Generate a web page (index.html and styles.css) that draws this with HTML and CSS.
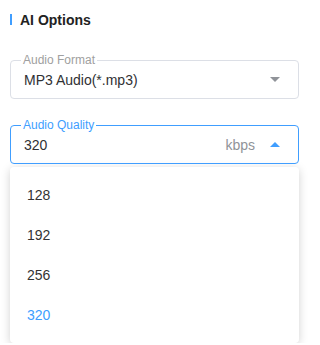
FILE: index.html
```html
<!DOCTYPE html>
<html lang="en">
<head>
<meta charset="utf-8">
<title>AI Options</title>
<link rel="stylesheet" href="styles.css">
</head>
<body>
<div class="panel">
  <div class="title"><span class="bar"></span><span>AI Options</span></div>

  <div class="field">
    <span class="label">Audio Format</span>
    <span class="value">MP3 Audio(*.mp3)</span>
    <span class="caret down"></span>
  </div>

  <div class="field focused">
    <span class="label">Audio Quality</span>
    <span class="value">320</span>
    <span class="unit">kbps</span>
    <span class="caret up"></span>
  </div>

  <ul class="menu">
    <li class="item">128</li>
    <li class="item">192</li>
    <li class="item">256</li>
    <li class="item selected">320</li>
  </ul>
</div>
</body>
</html>
```

FILE: styles.css
```css
html, body {
  margin: 0;
  padding: 0;
  background: #ffffff;
}

.panel {
  font-family: "Liberation Sans", Arial, sans-serif;
  width: 289px;
  padding: 12px 0 0 10px;
  display: flex;
  flex-direction: column;
}

.title {
  display: flex;
  align-items: center;
  gap: 8px;
  height: 15px;
  font-size: 14px;
  font-weight: bold;
  color: #222222;
}

.bar {
  width: 2px;
  height: 11px;
  background: #409eff;
}

.field {
  position: relative;
  box-sizing: border-box;
  height: 39px;
  border: 1px solid #dcdfe6;
  border-radius: 4px;
  display: flex;
  align-items: center;
  padding: 0 18px 0 13px;
  margin-top: 33px;
}

.field.focused {
  border-color: #409eff;
  margin-top: 26px;
}

.label {
  position: absolute;
  top: -7px;
  left: 10px;
  padding: 0 2px;
  background: #ffffff;
  font-size: 12px;
  line-height: 12px;
  color: #a0a0a0;
}

.focused .label {
  color: #409eff;
}

.value {
  flex: 1;
  font-size: 14px;
  color: #303133;
}

.unit {
  font-size: 14px;
  color: #909399;
  margin-right: 15px;
}

.caret {
  width: 0;
  height: 0;
  border-left: 5px solid transparent;
  border-right: 5px solid transparent;
}

.caret.down {
  border-top: 5px solid #909399;
}

.caret.up {
  border-bottom: 5px solid #409eff;
}

.menu {
  list-style: none;
  margin: 3px 0 0 0;
  padding: 8px 0;
  background: #ffffff;
  border-radius: 4px;
  box-shadow: 0 2px 10px rgba(0, 0, 0, 0.18);
}

.item {
  height: 40px;
  display: flex;
  align-items: center;
  padding-left: 17px;
  font-size: 14px;
  color: #333333;
}

.item.selected {
  color: #409eff;
}
```
